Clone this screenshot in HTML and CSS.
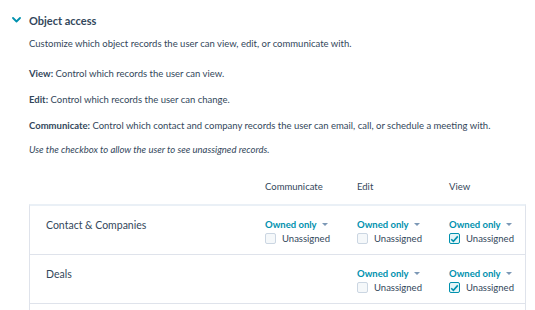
FILE: index.html
```html
<!DOCTYPE html>
<html lang="en">
<head>
    <meta charset="UTF-8">
    <title>Object access</title>
    <link rel="stylesheet" href="styles.css">
</head>
<body>

    <!-- Section header -->
    <div class="section-header">
        <svg class="chevron" width="9" height="6" viewBox="0 0 9 6"><path d="M1 1l3.5 3.5L8 1" fill="none" stroke="#0091ae" stroke-width="1.8" stroke-linecap="round" stroke-linejoin="round"/></svg>
        <h2>Object access</h2>
    </div>

    <div class="section-body">
        <p class="intro">Customize which object records the user can view, edit, or communicate with.</p>
        <p><b>View:</b> Control which records the user can view.</p>
        <p><b>Edit:</b> Control which records the user can change.</p>
        <p><b>Communicate:</b> Control which contact and company records the user can email, call, or schedule a meeting with.</p>
        <p class="hint">Use the checkbox to allow the user to see unassigned records.</p>

        <!-- Permissions table -->
        <div class="perm-head">
            <span></span>
            <span>Communicate</span>
            <span>Edit</span>
            <span>View</span>
        </div>

        <div class="perm-table">
            <div class="perm-row">
                <div class="perm-name">Contact &amp; Companies</div>
                <div class="perm-cell">
                    <button class="dropdown">Owned only <span class="caret"></span></button>
                    <label class="check"><span class="box"></span>Unassigned</label>
                </div>
                <div class="perm-cell">
                    <button class="dropdown">Owned only <span class="caret"></span></button>
                    <label class="check"><span class="box"></span>Unassigned</label>
                </div>
                <div class="perm-cell">
                    <button class="dropdown">Owned only <span class="caret"></span></button>
                    <label class="check"><span class="box checked"><svg width="9" height="8" viewBox="0 0 9 8"><path d="M1.2 4.2l2.2 2.2L7.8 1.4" fill="none" stroke="#0091ae" stroke-width="1.6"/></svg></span>Unassigned</label>
                </div>
            </div>
            <div class="perm-row">
                <div class="perm-name">Deals</div>
                <div class="perm-cell"></div>
                <div class="perm-cell">
                    <button class="dropdown">Owned only <span class="caret"></span></button>
                    <label class="check"><span class="box"></span>Unassigned</label>
                </div>
                <div class="perm-cell">
                    <button class="dropdown">Owned only <span class="caret"></span></button>
                    <label class="check"><span class="box checked"><svg width="9" height="8" viewBox="0 0 9 8"><path d="M1.2 4.2l2.2 2.2L7.8 1.4" fill="none" stroke="#0091ae" stroke-width="1.6"/></svg></span>Unassigned</label>
                </div>
            </div>
            <div class="perm-row"></div>
        </div>
    </div>

</body>
</html>
```

FILE: styles.css
```css
* {
    margin: 0;
    padding: 0;
    box-sizing: border-box;
}

body {
    font-family: Lato, "Open Sans", sans-serif;
    font-size: 9.5px;
    color: #33475b;
    background: #fff;
    width: 535px;
    height: 310px;
    overflow: hidden;
}

/* Section header */
.section-header {
    display: flex;
    align-items: center;
    height: 20px;
    margin-top: 10px;
    padding-left: 12px;
}

.chevron {
    margin-right: 8px;
}

.section-header h2 {
    font-size: 11px;
    font-weight: 700;
    color: #33475b;
}

.section-body {
    padding-left: 29px;
}

.section-body p {
    line-height: 14px;
    margin-top: 12px;
}

.section-body p.intro {
    margin-top: 7px;
    margin-bottom: 16px;
}

.section-body p.hint {
    margin-top: 10px;
    font-style: italic;
}

.section-body b {
    font-weight: 700;
}

/* Permissions table */
.perm-head {
    display: grid;
    grid-template-columns: 236px 92px 92px 1fr;
    margin-top: 23px;
    height: 24px;
    line-height: 14px;
}

.perm-table {
    width: 497px;
    border-left: 1px solid #dfe3eb;
    border-right: 1px solid #dfe3eb;
    border-top: 2px solid #eaf0f6;
}

.perm-row {
    display: grid;
    grid-template-columns: 235px 92px 92px 1fr;
    height: 49px;
    border-bottom: 1px solid #dfe3eb;
}

.perm-name {
    padding-left: 16px;
    padding-top: 13px;
    font-size: 10.5px;
}

.perm-cell {
    display: flex;
    flex-direction: column;
    align-items: flex-start;
    padding-top: 12px;
    gap: 2px;
}

.dropdown {
    border: none;
    background: none;
    font-family: inherit;
    font-size: 9.5px;
    font-weight: 700;
    color: #0091ae;
    display: flex;
    align-items: center;
    gap: 5px;
    cursor: pointer;
    height: 13px;
}

.caret {
    width: 0;
    height: 0;
    border-left: 3px solid transparent;
    border-right: 3px solid transparent;
    border-top: 3px solid #7c98b6;
}

.check {
    display: flex;
    align-items: center;
    gap: 6px;
    font-size: 9.5px;
}

.box {
    width: 11px;
    height: 11px;
    border: 1px solid #cbd6e2;
    border-radius: 2px;
    background: #f5f8fa;
    display: flex;
    align-items: center;
    justify-content: center;
}

.box.checked {
    border: 1.5px solid #0091ae;
    background: #e5f5f8;
}
```
